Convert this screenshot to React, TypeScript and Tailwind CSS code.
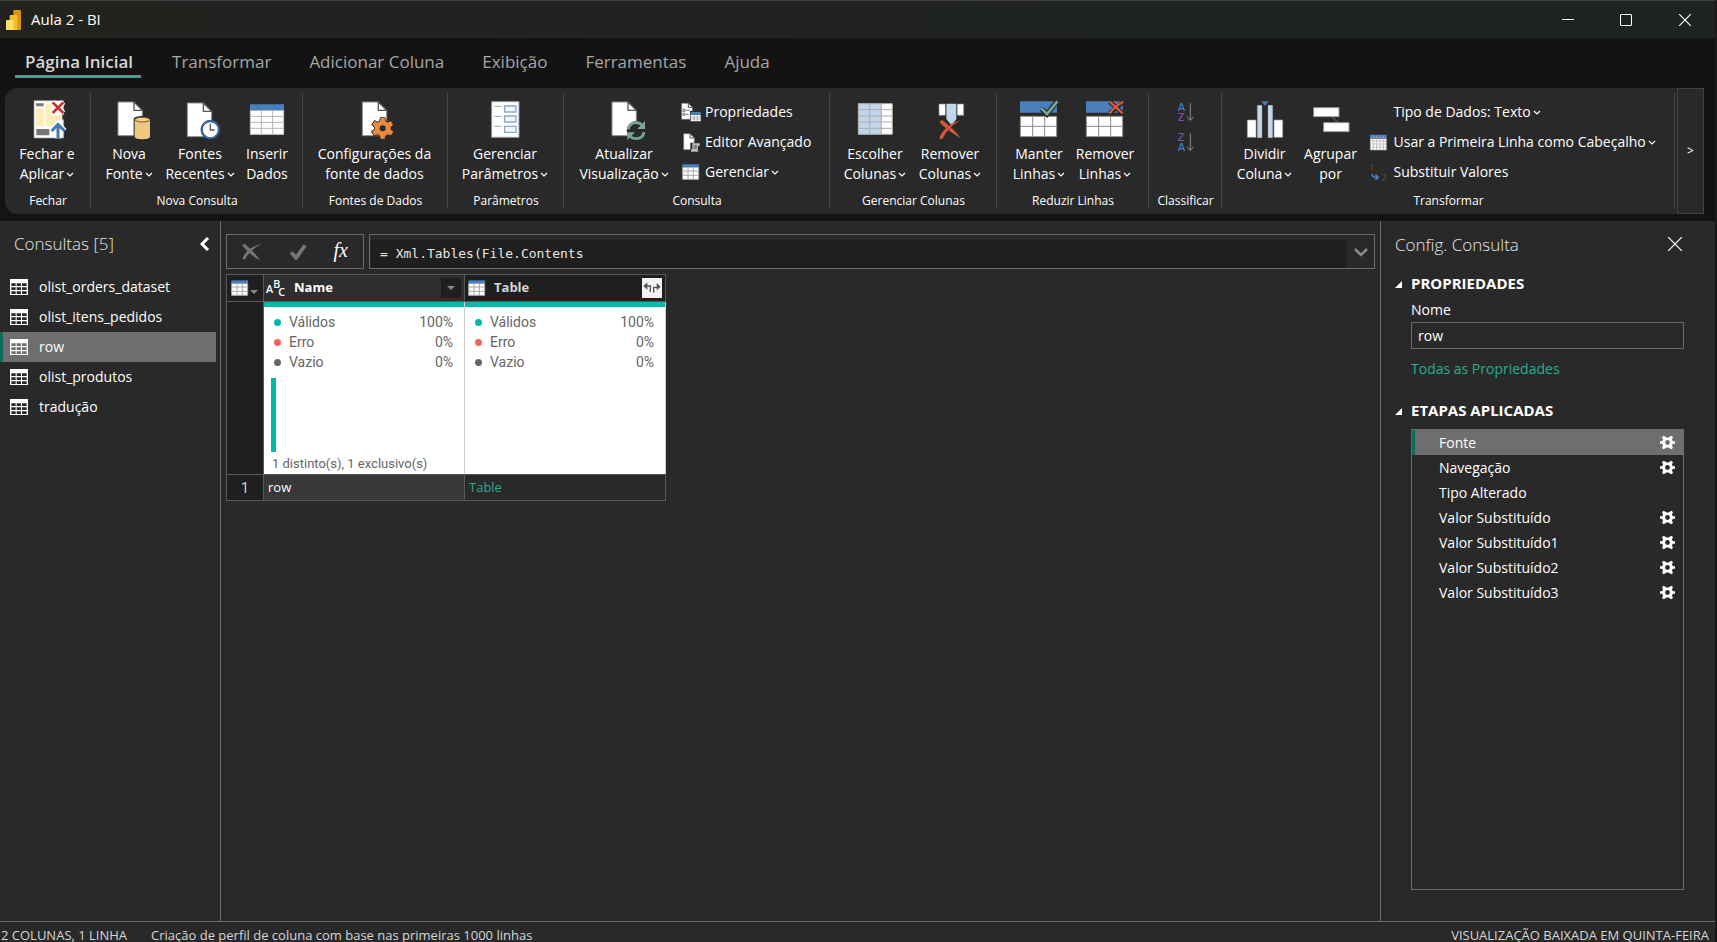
import React from 'react';
import clsx from 'clsx';

interface IconProps {
  className?: string;
}

interface SvgProps extends IconProps {
  size?: 'lg' | 'sm';
  children: React.ReactNode;
}

const Svg: React.FC<SvgProps> = ({ size = 'lg', className, children }) => (
  <svg
    viewBox={size === 'lg' ? '0 0 120 120' : '0 0 60 60'}
    className={clsx('shrink-0 overflow-visible', size === 'lg' ? 'size-10' : 'size-5', className)}
    fill="none"
    aria-hidden="true"
  >
    {children}
  </svg>
);

const Doc: React.FC<{ x: number; y: number }> = ({ x, y }) => (
  <g transform={`translate(${x} ${y})`}>
    <path d="M0 0H48L73 25V101H0Z" fill="#fff" stroke="#8a8a8a" strokeWidth="3" />
    <path d="M48 0V25H73Z" fill="#fff" stroke="#555" strokeWidth="4" strokeLinejoin="round" />
  </g>
);

const CloseApplyIcon = () => (
  <Svg>
    <path d="M21 5H110V47H104V62H110V117H21Z" fill="#fff" stroke="#9a9a9a" strokeWidth="2" />
    <path d="M27 13h23v9H27z" fill="#777" />
    <path d="M28 28h22v54H28z" fill="#fdeeb5" />
    <path d="M56 14h15v34h35v16H92L74 82H56z" fill="#fdeeb5" />
    <path d="M28 90h39v19H28z" fill="#777" />
    <path d="M77 9L109 42M109 9L77 42" stroke="#fff" strokeWidth="16" />
    <path d="M77 10L109 42M109 10L77 42" stroke="#cc2f2f" strokeWidth="8" />
    <path d="M93 118V74M74 96L93 76L112 96" stroke="#fff" strokeWidth="18" />
    <path d="M93 118V76M74 96L93 76L113 96" stroke="#3f7ab5" strokeWidth="9" />
  </Svg>
);

const NewSourceIcon = () => (
  <Svg>
    <Doc x={27} y={9} />
    <path d="M74 60v56c0 10 52 10 52 0V60c0-12-52-12-52 0z" fill="#292929" />
    <path d="M77 61v52c0 10 46 10 46 0V61z" fill="#efc87f" />
    <ellipse cx="100" cy="62" rx="22" ry="7" fill="#f3d08c" stroke="#6b5225" strokeWidth="3" />
  </Svg>
);

const RecentSourcesIcon = () => (
  <Svg>
    <Doc x={22} y={12} />
    <circle cx="91" cy="92" r="26" fill="#fff" stroke="#29405c" strokeWidth="7" />
    <circle cx="91" cy="92" r="26" stroke="#3f73ad" strokeWidth="4" />
    <path d="M91 74v19h13" stroke="#555" strokeWidth="4" />
  </Svg>
);

const EnterDataIcon = () => (
  <Svg>
    <path d="M9 34h102v73H9z" fill="#fff" />
    <path d="M9 16h102v18H9z" fill="#4a7fbd" />
    <path d="M9 52h102M9 70h102M9 88h102M43 34v72M77 34v72M10 34v72h100V34" stroke="#b5b5b5" strokeWidth="3" />
  </Svg>
);

const GEAR =
  'M-6-31H6L8-21L15-17L24-22L31-11L24-4V4L32 10L25 21L15 18L8 22L6 31H-6L-8 22L-15 18L-25 21L-32 10L-24 4V-4L-31-11L-24-22L-15-17L-8-21Z';

const SourceSettingsIcon = () => (
  <Svg>
    <Doc x={22} y={9} />
    <g transform="translate(83 88)">
      <path d={GEAR} fill="#292929" stroke="#292929" strokeWidth="5" />
      <path d={GEAR} fill="#e88b3f" />
      <circle r="9" fill="#292929" />
    </g>
  </Svg>
);

const ParametersIcon = () => (
  <Svg>
    <path d="M20 8h82v107H20z" fill="#fff" stroke="#9a9a9a" strokeWidth="3" />
    <path d="M59 21h34v18H59zM59 51h34v18H59zM59 82h34v18H59z" fill="#f4f8fc" stroke="#86aad4" strokeWidth="4" />
    <path d="M28 22h22M28 52h22M28 82h22" stroke="#a5a5a5" strokeWidth="3" />
  </Svg>
);

const RefreshIcon = () => (
  <Svg>
    <Doc x={24} y={9} />
    <circle cx="97" cy="95" r="29" fill="#292929" />
    <g stroke="#78a894" strokeWidth="8">
      <path d="M73 91c2-13 12-20 24-20 9 0 15 4 20 10" />
      <path d="M120 99c-2 13-12 20-24 20-9 0-15-4-20-10" />
    </g>
    <path d="M123 66v24H100zM70 123V100h23z" fill="#78a894" />
  </Svg>
);

const ChooseColumnsIcon = () => (
  <Svg>
    <path d="M10 14h102v92H10z" fill="#fff" />
    <path d="M10 14h68v92H10z" fill="#c3d5ea" />
    <path d="M10 32h102M10 51h102M10 69h102M10 88h102M44 14v92M79 14v92M10 14h102v92H10z" stroke="#adadad" strokeWidth="3" />
  </Svg>
);

const RemoveColumnsIcon = () => (
  <Svg>
    <path d="M27 15h74v34H27z" fill="#fff" stroke="#8a8a8a" strokeWidth="2" />
    <path d="M46 12h36v70H46z" fill="#292929" />
    <path d="M49 14h30v46L68 76H62L49 60z" fill="#c3d5ea" />
    <path d="M29 70C32 62 36 62 40 66C57 78 78 98 94 119C74 108 42 87 29 70z" fill="#d9593a" stroke="#292929" strokeWidth="1" />
    <path d="M94 63C70 76 50 94 38 119C34 123 27 120 29 113C40 90 64 70 94 63z" fill="#d9593a" stroke="#292929" strokeWidth="1" />
  </Svg>
);

const RowsBase: React.FC = () => (
  <>
    <path d="M3 7h111v34H3z" fill="#4a7fbd" />
    <path d="M4 52h109v61H4z" fill="#fff" />
    <path d="M4 52h109v61H4zM4 82h109M41 52v61M77 52v61" stroke="#8a8a8a" strokeWidth="3" />
  </>
);

const KeepRowsIcon = () => (
  <Svg>
    <RowsBase />
    <path d="M68 30L84 46L114 7" stroke="#292929" strokeWidth="15" />
    <path d="M68 29L84 45L115 7" stroke="#78a894" strokeWidth="8" />
  </Svg>
);

const RemoveRowsIcon = () => (
  <Svg>
    <RowsBase />
    <path d="M74 8L112 42M115 8L74 43" stroke="#292929" strokeWidth="14" />
    <path d="M74 8L113 43M115 8C100 16 82 30 74 43" stroke="#d9593a" strokeWidth="7" />
  </Svg>
);

const SplitColumnIcon = () => (
  <Svg>
    <path d="M7 63h26v52H7zM87 63h26v52H87z" fill="#fff" stroke="#9a9a9a" strokeWidth="2" />
    <path d="M37 19h14v97H37zM69 19h14v97H69z" fill="#c3d5ea" stroke="#9aa5b3" strokeWidth="1" />
    <path d="M48 7h24L60 20z" fill="#4a7fbd" />
  </Svg>
);

const GroupByIcon = () => (
  <Svg>
    <path d="M63 53L82 72" stroke="#555" strokeWidth="4" />
    <path d="M8 26h76v27H8zM38 71h76v27H38z" fill="#fff" stroke="#9a9a9a" strokeWidth="3" />
  </Svg>
);

const PropertiesIcon = () => (
  <Svg size="sm">
    <path d="M2 4h20l12 12v36H2z" fill="#fff" stroke="#777" strokeWidth="2" />
    <path d="M22 4v12h12" stroke="#555" strokeWidth="3" />
    <path d="M6 22h6v6H6zM6 34h6v6H6zM15 25h12M15 37h8" stroke="#777" strokeWidth="3" />
    <path d="M27 27h34v32H27z" fill="#292929" />
    <path d="M29 38h30v20H29z" fill="#fff" />
    <path d="M29 30h30v8H29z" fill="#4a7fbd" />
    <path d="M29 45h30M29 51h30M39 38v19M49 38v19" stroke="#999" strokeWidth="2" />
  </Svg>
);

const AdvancedEditorIcon = () => (
  <Svg size="sm">
    <path d="M8 5h19l13 13v35H8z" fill="#fff" stroke="#777" strokeWidth="2" />
    <path d="M27 5v13h13" stroke="#555" strokeWidth="3" />
    <path d="M28 32h30v28H28z" fill="#292929" />
    <path d="M34 34h22v8h-5v17H30v-7h4z" fill="#bdbdbd" />
    <path d="M38 42h10M38 48h10" stroke="#444" strokeWidth="3" />
  </Svg>
);

const TableIcon: React.FC<IconProps> = ({ className }) => (
  <Svg size="sm" className={className}>
    <path d="M5 16h48v36H5z" fill="#fff" />
    <path d="M4 7h50v9H4z" fill="#4a7fbd" />
    <path d="M5 27h48M5 40h48M21 16v36M37 16v36M5 16v36h48V16" stroke="#a8a8a8" strokeWidth="3" />
  </Svg>
);

const FirstRowIcon = () => (
  <Svg size="sm">
    <path d="M1 20h48v34H1z" fill="#fff" />
    <path d="M0 8h50v10H0z" fill="#4a7fbd" />
    <path d="M1 18h48M1 27h48M1 36h48M1 45h48M10 10v44M20 10v44M30 10v44M40 10v44M1 18v36h48V18" stroke="#a8a8a8" strokeWidth="2" />
  </Svg>
);

const ReplaceIcon = () => (
  <Svg size="sm">
    <text x="-3" y="27" fontSize="28" fill="#555" fontFamily="Open Sans">1</text>
    <text x="34" y="57" fontSize="28" fill="#555" fontFamily="Open Sans">2</text>
    <path d="M6 36c0 8 4 10 18 10M16 38l9 8-9 8" stroke="#4a7fbd" strokeWidth="5" />
  </Svg>
);

// White list icon for the queries pane
const QueryIcon: React.FC<{ active?: boolean }> = ({ active }) => (
  <svg viewBox="0 0 54 48" className="h-4 w-[18px] shrink-0" aria-hidden="true">
    <path d="M0 0h54v48H0z" fill="#fff" />
    <path
      d="M4 13h13v8H4zM20 13h13v8H20zM36 13h14v8H36zM4 25h13v8H4zM20 25h13v8H20zM36 25h14v8H36zM4 37h13v8H4zM20 37h13v8H20zM36 37h14v8H36z"
      fill={active ? '#6e6e6e' : '#292929'}
    />
  </svg>
);

const StepGear = () => (
  <svg viewBox="-22 -22 44 44" className="size-[15px]" aria-hidden="true">
    <path
      fillRule="evenodd"
      d="M-11-20L-3-15H3L11-20L16-16L13-8L16-4H22V4H16L13 8L16 16L11 20L3 15H-3L-11 20L-16 16L-13 8L-16 4H-22V-4H-16L-13-8L-16-16ZM0-7A7 7 0 1 0 0 7A7 7 0 1 0 0-7Z"
      fill="#fff"
    />
  </svg>
);

const letterColor = (letter: string) => (letter === 'A' ? '#3f7ab5' : '#7d4d9e');

const SortIcon: React.FC<{ top: string; bottom: string }> = ({ top, bottom }) => (
  <Svg size="sm">
    <g fontSize="34" fontWeight="600" fontFamily="Open Sans">
      <text x="8" y="28" fill={letterColor(top)}>{top}</text>
      <text x="8" y="57" fill={letterColor(bottom)}>{bottom}</text>
    </g>
    <path d="M46 4v51M36 44l10 11 10-11" stroke="#8a8a8a" strokeWidth="3" />
  </Svg>
);

const Caret = () => (
  <svg viewBox="0 0 8 6" className="ml-[2px] inline-block h-[6px] w-2" fill="none" aria-hidden="true">
    <path d="M1 1l3 3 3-3" stroke="#fff" strokeWidth="1.2" />
  </svg>
);

interface GroupProps {
  title: string;
  className?: string;
  children: React.ReactNode;
}

const Group: React.FC<GroupProps> = ({ title, className, children }) => (
  <section className={clsx('relative flex shrink-0 flex-col items-center', className)}>
    <div className="flex h-[103px] w-full justify-center pt-[9px] pr-[2px]">{children}</div>
    <h2 className="text-xs leading-5 whitespace-nowrap">{title}</h2>
    <span className="absolute top-[5px] right-0 bottom-[5px] w-px bg-[#464646]" />
  </section>
);

interface BigButtonProps {
  icon: React.ReactNode;
  lines: [string, string];
  caret?: boolean;
  className?: string;
}

const BigButton: React.FC<BigButtonProps> = ({ icon, lines, caret, className }) => (
  <button type="button" className={clsx('flex flex-col items-center pt-[2px] leading-5 whitespace-nowrap', className)}>
    {icon}
    <span className="mt-[5px]">{lines[0]}</span>
    <span>
      {lines[1]}
      {caret && <Caret />}
    </span>
  </button>
);

const SmallButton: React.FC<{ icon: React.ReactNode; label: string; caret?: boolean }> = ({ icon, label, caret }) => (
  <button type="button" className="flex h-[30px] items-center gap-1 whitespace-nowrap">
    {icon}
    <span>
      {label}
      {caret && <Caret />}
    </span>
  </button>
);

const tabs = ['Transformar', 'Adicionar Coluna', 'Exibição', 'Ferramentas', 'Ajuda'];

const queries = ['olist_orders_dataset', 'olist_itens_pedidos', 'row', 'olist_produtos', 'tradução'];

const steps = [
  { name: 'Fonte', gear: true },
  { name: 'Navegação', gear: true },
  { name: 'Tipo Alterado', gear: false },
  { name: 'Valor Substituído', gear: true },
  { name: 'Valor Substituído1', gear: true },
  { name: 'Valor Substituído2', gear: true },
  { name: 'Valor Substituído3', gear: true },
];

const quality = [
  { label: 'Válidos', value: '100%', dot: 'bg-[#01b8aa]' },
  { label: 'Erro', value: '0%', dot: 'bg-[#fd625e]' },
  { label: 'Vazio', value: '0%', dot: 'bg-[#666666]' },
];

const TitleBar = () => (
  <header className="flex h-[38px] shrink-0 items-center border-t border-[#424242] bg-linear-to-r from-[#22231f] to-[#1d2223] pl-[6px]">
    <svg viewBox="0 0 45 60" className="h-5 w-[15px]" aria-hidden="true">
      <path d="M22 3q0-3 3-3h17q3 0 3 3v57H22z" fill="#d9940f" />
      <path d="M11 18q0-3 3-3h17q3 0 3 3v42H11z" fill="#f0c12b" />
      <path d="M0 33q0-3 3-3h17q3 0 3 3v27H0z" fill="#fbe06b" />
    </svg>
    <h1 className="ml-[10px] text-[15px]">Aula 2 - BI</h1>
    <div className="ml-auto flex pr-px">
      <button type="button" aria-label="Minimizar" className="flex h-9 w-[58px] items-center justify-center">
        <span className="h-px w-3 bg-white" />
      </button>
      <button type="button" aria-label="Maximizar" className="flex h-9 w-[58px] items-center justify-center">
        <span className="size-3 rounded-[1px] border border-white" />
      </button>
      <button type="button" aria-label="Fechar janela" className="flex h-9 w-[59px] items-center justify-center">
        <svg viewBox="0 0 12 12" className="size-3" fill="none">
          <path d="M0 0l12 12M12 0L0 12" stroke="#fff" strokeWidth="1.2" />
        </svg>
      </button>
    </div>
  </header>
);

const Tabs = () => (
  <nav className="flex h-[50px] shrink-0 items-start bg-[#131313] pl-[15px] text-[17px] text-[#a6a6a6]">
    <a href="#home" className="mr-[31px] h-10 border-b-3 border-[#2bac93] pt-3 pr-2 pl-[10px] leading-6 font-semibold text-[#d6d6d6]">
      Página Inicial
    </a>
    {tabs.map((tab) => (
      <a key={tab} href={`#${tab}`} className="mr-[38px] pt-3 leading-6 whitespace-nowrap">
        {tab}
      </a>
    ))}
  </nav>
);

const Ribbon = () => (
  <div className="flex h-[133px] shrink-0 bg-[#131313] pr-[11px] pb-[7px] pl-[5px]">
    <div className="flex min-w-0 flex-1 overflow-hidden rounded-l-xl bg-[#292929] text-sm">
      <Group title="Fechar" className="w-[86px]">
        <BigButton icon={<CloseApplyIcon />} lines={['Fechar e', 'Aplicar']} caret className="w-[84px]" />
      </Group>
      <Group title="Nova Consulta" className="w-[212px]">
        <BigButton icon={<NewSourceIcon />} lines={['Nova', 'Fonte']} caret className="w-[64px]" />
        <BigButton icon={<RecentSourcesIcon />} lines={['Fontes', 'Recentes']} caret className="w-[78px]" />
        <BigButton icon={<EnterDataIcon />} lines={['Inserir', 'Dados']} className="w-[56px]" />
      </Group>
      <Group title="Fontes de Dados" className="w-[145px]">
        <BigButton icon={<SourceSettingsIcon />} lines={['Configurações da', 'fonte de dados']} />
      </Group>
      <Group title="Parâmetros" className="w-[116px]">
        <BigButton icon={<ParametersIcon />} lines={['Gerenciar', 'Parâmetros']} caret />
      </Group>
      <Group title="Consulta" className="w-[266px]">
        <BigButton icon={<RefreshIcon />} lines={['Atualizar', 'Visualização']} caret className="w-[106px]" />
        <div className="ml-1 w-[140px]">
          <SmallButton icon={<PropertiesIcon />} label="Propriedades" />
          <SmallButton icon={<AdvancedEditorIcon />} label="Editor Avançado" />
          <SmallButton icon={<TableIcon />} label="Gerenciar" caret />
        </div>
      </Group>
      <Group title="Gerenciar Colunas" className="w-[167px]">
        <BigButton icon={<ChooseColumnsIcon />} lines={['Escolher', 'Colunas']} caret className="w-[75px]" />
        <BigButton icon={<RemoveColumnsIcon />} lines={['Remover', 'Colunas']} caret className="w-[75px]" />
      </Group>
      <Group title="Reduzir Linhas" className="w-[152px]">
        <BigButton icon={<KeepRowsIcon />} lines={['Manter', 'Linhas']} caret className="w-[66px]" />
        <BigButton icon={<RemoveRowsIcon />} lines={['Remover', 'Linhas']} caret className="w-[66px]" />
      </Group>
      <Group title="Classificar" className="w-[73px]">
        <div>
          <button type="button" aria-label="Classificar em ordem crescente" className="flex h-[30px] items-center">
            <SortIcon top="A" bottom="Z" />
          </button>
          <button type="button" aria-label="Classificar em ordem decrescente" className="flex h-[30px] items-center">
            <SortIcon top="Z" bottom="A" />
          </button>
        </div>
      </Group>
      <Group title="Transformar" className="w-[453px]">
        <BigButton icon={<SplitColumnIcon />} lines={['Dividir', 'Coluna']} caret className="w-[66px]" />
        <BigButton icon={<GroupByIcon />} lines={['Agrupar', 'por']} className="w-[66px]" />
        <div className="ml-[6px] w-[294px]">
          <SmallButton icon={<span className="w-5" />} label="Tipo de Dados: Texto" caret />
          <SmallButton icon={<FirstRowIcon />} label="Usar a Primeira Linha como Cabeçalho" caret />
          <SmallButton icon={<ReplaceIcon />} label="Substituir Valores" />
        </div>
      </Group>
    </div>
    <button type="button" aria-label="Rolar faixa de opções" className="w-[27px] border border-[#424242] bg-[#292929] text-xs">
      &gt;
    </button>
  </div>
);

const QueriesPane = () => (
  <aside className="w-[221px] shrink-0 border-r border-[#6b6b6b]">
    <div className="flex h-[51px] items-center justify-between pr-[10px] pb-[5px] pl-[14px]">
      <h2 className="text-[17px] font-light text-[#e6e6e6]">Consultas [5]</h2>
      <button type="button" aria-label="Recolher painel">
        <svg viewBox="0 0 10 14" className="h-[14px] w-[10px]" fill="none">
          <path d="M8 1L2 7l6 6" stroke="#fff" strokeWidth="3" />
        </svg>
      </button>
    </div>
    <ul className="text-sm">
      {queries.map((query) => (
        <li key={query}>
          <button
            type="button"
            className={clsx(
              'flex h-[30px] w-[216px] items-center gap-[11px] border-l-3 pl-[7px]',
              query === 'row' ? 'border-[#0f6b58] bg-[#6e6e6e]' : 'border-transparent',
            )}
          >
            <QueryIcon active={query === 'row'} />
            {query}
          </button>
        </li>
      ))}
    </ul>
  </aside>
);

const FormulaBar = () => (
  <div className="flex h-[35px] gap-[5px]">
    <div className="flex w-[138px] items-center justify-between border border-[#6b6b6b] px-[15px]">
      <button type="button" aria-label="Cancelar">
        <svg viewBox="0 0 60 54" className="h-[18px] w-5">
          <path d="M0 6L7 2Q34 22 54 52Q20 34 0 6zM60 2Q26 18 8 50L1 47Q16 12 60 2z" fill="#757575" />
        </svg>
      </button>
      <button type="button" aria-label="Confirmar">
        <svg viewBox="0 0 54 48" className="h-4 w-[18px]">
          <path d="M2 28L11 22L21 32L44 1L53 7L24 48H19Z" fill="#757575" />
        </svg>
      </button>
      <button type="button" aria-label="Inserir etapa" className="pb-1 font-['Liberation_Serif',serif] text-xl leading-5 italic">
        fx
      </button>
    </div>
    <div className="flex min-w-0 flex-1 border border-[#6b6b6b] pt-[5px] pl-px">
      <input
        aria-label="Fórmula"
        defaultValue="= Xml.Tables(File.Contents"
        className="min-w-0 flex-1 bg-[#1f1f1f] px-[9px] font-['DejaVu_Sans_Mono',monospace] text-[13px] text-[#e6e6e6] outline-none"
      />
      <button type="button" aria-label="Expandir" className="flex w-[27px] items-center justify-center pb-1">
        <svg viewBox="0 0 14 9" className="h-[9px] w-[14px]" fill="none">
          <path d="M1 1l6 6 6-6" stroke="#8a8a8a" strokeWidth="2.5" />
        </svg>
      </button>
    </div>
  </div>
);

const Profile: React.FC<{ distinct?: boolean }> = ({ distinct }) => (
  <div className="flex h-[172px] flex-col border-t-[5px] border-[#01b8aa] bg-white font-[Roboto,sans-serif] text-sm text-[#666]">
    <ul className="pt-[5px] pr-[11px] pl-[10px]">
      {quality.map((item) => (
        <li key={item.label} className="flex h-5 items-center">
          <span className={clsx('mr-2 size-[7px] rounded-full', item.dot)} />
          {item.label}
          <span className="ml-auto">{item.value}</span>
        </li>
      ))}
    </ul>
    {distinct && (
      <>
        <span className="mt-[6px] ml-[7px] h-[74px] w-[5px] bg-[#01b8aa]" />
        <p className="mt-[2px] ml-2 text-[13px] leading-5">1 distinto(s), 1 exclusivo(s)</p>
      </>
    )}
  </div>
);

const DataGrid = () => (
  <table className="mt-[5px] w-[440px] table-fixed border-collapse text-left text-[13px] [&_td]:border [&_td]:border-[#585858] [&_th]:border [&_th]:border-[#585858]">
    <thead>
      <tr className="h-[27px]">
        <th className="w-[37px] bg-[#1f1f1f] p-0">
          <button type="button" aria-label="Opções da tabela" className="flex items-center pl-[3px]">
            <TableIcon />
            <svg viewBox="0 0 8 4" className="mt-2 h-1 w-2">
              <path d="M0 0h8L4 4z" fill="#8a8a8a" />
            </svg>
          </button>
        </th>
        <th className="bg-[#2e2e2e] p-0">
          <div className="flex h-[26px] items-center pr-[3px]">
            <svg viewBox="0 0 60 54" className="ml-[2px] h-[18px] w-5 overflow-visible" fill="#fff" fontFamily="Open Sans" fontSize="32" fontWeight="600" aria-hidden="true">
              <text x="0" y="41">A</text>
              <text x="22" y="27">B</text>
              <text x="37" y="52">C</text>
            </svg>
            <span className="ml-2 font-bold">Name</span>
            <button type="button" aria-label="Filtrar Name" className="ml-auto flex size-5 items-center justify-center bg-[#1f1f1f]">
              <svg viewBox="0 0 8 4" className="h-1 w-2">
                <path d="M0 0h8L4 4z" fill="#8a8a8a" />
              </svg>
            </button>
          </div>
        </th>
        <th className="bg-[#1f1f1f] p-0">
          <div className="flex h-[26px] items-center pr-[3px] pl-[2px]">
            <TableIcon />
            <span className="ml-[7px] font-bold text-[#d6d6d6]">Table</span>
            <button type="button" aria-label="Expandir Table" className="ml-auto flex size-5 items-center justify-center bg-[#f2f2f2]">
              <svg viewBox="0 0 54 36" className="h-3 w-[18px]" fill="none">
                <path d="M6 12h16v18M48 16H32v16" stroke="#555" strokeWidth="4" />
                <path d="M13 1L1 12l12 11zM41 3l12 11-12 11z" fill="#555" />
              </svg>
            </button>
          </div>
        </th>
      </tr>
    </thead>
    <tbody>
      <tr>
        <td className="bg-[#1f1f1f] p-0" />
        <td className="border-r-[#cfcfcf]! p-0 align-top">
          <Profile distinct />
        </td>
        <td className="border-r-[#cfcfcf]! p-0 align-top">
          <Profile />
        </td>
      </tr>
      <tr className="h-[26px]">
        <td className="bg-[#1f1f1f] p-0 text-center font-[Roboto,sans-serif] text-sm text-[#d6d6d6]">1</td>
        <td className="bg-[#383838] px-1 py-0">row</td>
        <td className="px-1 py-0">
          <a href="#table" className="text-[#2bac93]">Table</a>
        </td>
      </tr>
    </tbody>
  </table>
);

const SectionTitle: React.FC<{ children: string }> = ({ children }) => (
  <h3 className="flex h-5 items-center text-[15px] font-bold">
    <svg viewBox="0 0 7 7" className="mr-[9px] size-[7px]" aria-hidden="true">
      <path d="M7 0v7H0z" fill="#fff" />
    </svg>
    {children}
  </h3>
);

const SettingsPane = () => (
  <aside className="flex w-[335px] shrink-0 flex-col border-l border-[#6b6b6b] pr-[31px] pl-[14px] text-sm">
    <div className="flex h-[53px] items-center justify-between pb-1">
      <h2 className="text-[17px] font-light text-[#e6e6e6]">Config. Consulta</h2>
      <button type="button" aria-label="Fechar painel" className="mr-[2px] mb-1">
        <svg viewBox="0 0 14 14" className="size-[14px]" fill="none">
          <path d="M0 0l14 14M14 0L0 14" stroke="#fff" strokeWidth="1.2" />
        </svg>
      </button>
    </div>
    <SectionTitle>PROPRIEDADES</SectionTitle>
    <div className="flex flex-col pt-1 pl-4">
      <label htmlFor="query-name" className="leading-6">Nome</label>
      <input id="query-name" defaultValue="row" className="h-[27px] border border-[#6b6b6b] px-[6px] outline-none" />
      <a href="#properties" className="mt-2 leading-6 text-[#2bac93]">Todas as Propriedades</a>
    </div>
    <div className="mt-5">
      <SectionTitle>ETAPAS APLICADAS</SectionTitle>
    </div>
    <ul className="mt-2 mb-[31px] ml-4 flex-1 border border-[#6b6b6b]">
      {steps.map((step, index) => (
        <li
          key={step.name}
          className={clsx(
            'flex h-[25px] items-center justify-between border-l-3 pr-2 pl-6',
            index === 0 ? 'border-[#0f6b58] bg-[#6e6e6e]' : 'border-transparent',
          )}
        >
          {step.name}
          {step.gear && (
            <button type="button" aria-label={`Configurar ${step.name}`}>
              <StepGear />
            </button>
          )}
        </li>
      ))}
    </ul>
  </aside>
);

const App: React.FC = () => {
  return (
    <div className="flex h-screen flex-col overflow-hidden border-r-2 border-[#1a1a1a] bg-[#292929] font-['Open_Sans',sans-serif] text-white">
      <TitleBar />
      <Tabs />
      <Ribbon />
      <div className="flex min-h-0 flex-1">
        <QueriesPane />
        <main className="min-w-0 flex-1 pt-[13px] pr-[5px] pl-[5px]">
          <FormulaBar />
          <DataGrid />
        </main>
        <SettingsPane />
      </div>
      <footer className="flex h-[21px] shrink-0 items-start justify-between border-t border-[#6b6b6b] pr-[6px] pl-[1px] text-[13px] leading-[26px] whitespace-nowrap text-[#d6d6d6]">
        <p>
          2 COLUNAS, 1 LINHA
          <span className="ml-6">Criação de perfil de coluna com base nas primeiras 1000 linhas</span>
        </p>
        <p>VISUALIZAÇÃO BAIXADA EM QUINTA-FEIRA</p>
      </footer>
    </div>
  );
};

export default App;
